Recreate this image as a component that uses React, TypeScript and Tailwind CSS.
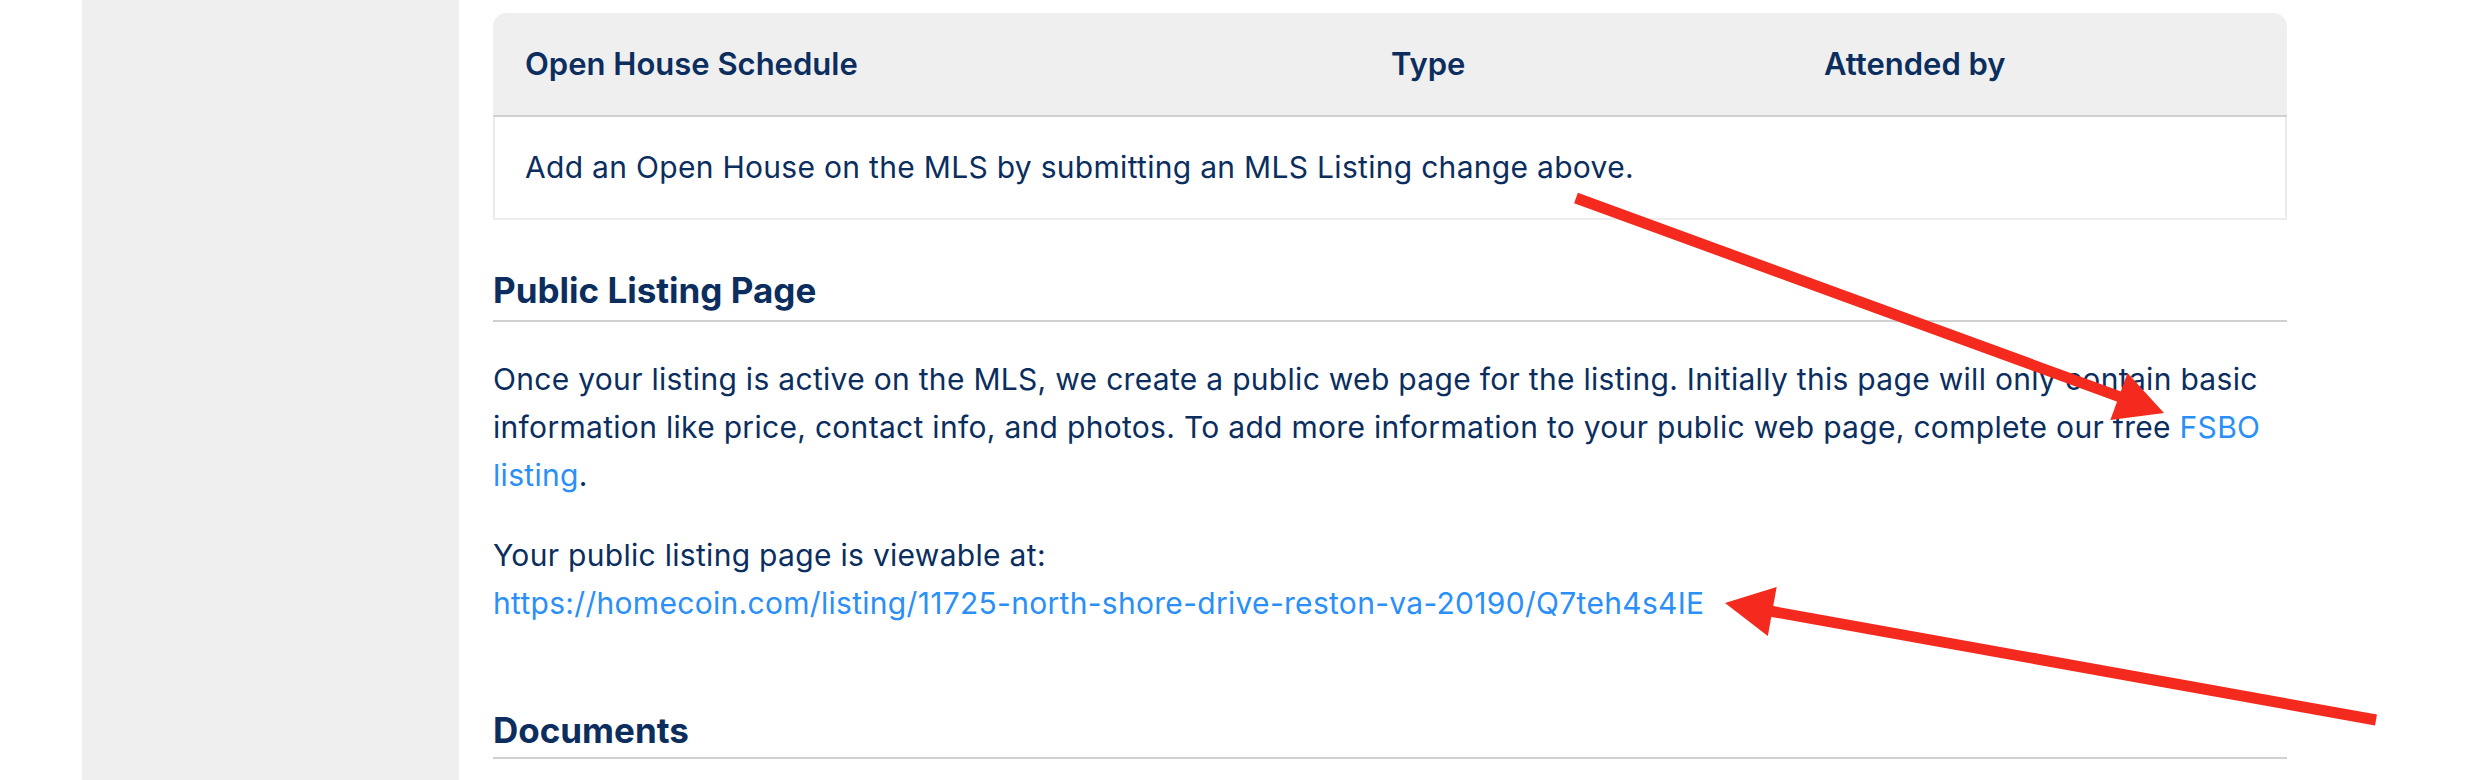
import React from "react";

const navy = "text-[#0b2e5e]";

const Arrow = ({
  tail,
  tip,
}: {
  tail: [number, number];
  tip: [number, number];
}) => {
  const dx = tip[0] - tail[0];
  const dy = tip[1] - tail[1];
  const len = Math.hypot(dx, dy);
  const ux = dx / len;
  const uy = dy / len;
  const nx = -uy;
  const ny = ux;
  const headLen = 48;
  const half = 25;
  const bx = tip[0] - ux * headLen;
  const by = tip[1] - uy * headLen;
  const pts = [
    `${tip[0]},${tip[1]}`,
    `${bx + nx * half},${by + ny * half}`,
    `${bx - nx * half},${by - ny * half}`,
  ].join(" ");
  return (
    <g>
      <line
        x1={tail[0]}
        y1={tail[1]}
        x2={bx + ux * 4}
        y2={by + uy * 4}
        stroke="#f42a1f"
        strokeWidth={11}
      />
      <polygon points={pts} fill="#f42a1f" />
    </g>
  );
};

export default function App() {
  return (
    <div
      className={`relative flex h-[780px] w-[2476px] overflow-hidden bg-white ${navy}`}
      style={{ fontFamily: "Inter, 'Liberation Sans', sans-serif" }}>
      <div className="w-[82px] shrink-0" />
      <div className="w-[377px] shrink-0 bg-[#efefef]" />

      <main className="ml-[34px] w-[1794px] shrink-0 pt-[13px]">
        {/* open house table */}
        <div className="overflow-hidden rounded-t-[14px]">
          <div className="grid h-[104px] grid-cols-[866px_433px_1fr] items-center border-b-2 border-[#d0d0d0] bg-[#efefef] text-[31px] font-semibold">
            <div className="pl-[32px]">Open House Schedule</div>
            <div className="pl-[32px]">Type</div>
            <div className="pl-[32px]">Attended by</div>
          </div>
          <div className="flex h-[103px] items-center border-2 border-t-0 border-[#ececec] pl-[30px] text-[30px] tracking-[0.3px]">
            Add an Open House on the MLS by submitting an MLS Listing change
            above.
          </div>
        </div>

        {/* public listing page */}
        <h2 className="mt-[46px] border-b-2 border-[#d0d0d0] pb-[6px] text-[35px] font-bold leading-[48px]">
          Public Listing Page
        </h2>
        <p className="mt-[33px] whitespace-nowrap text-[30px] leading-[48px] tracking-[0.3px]">
          Once your listing is active on the MLS, we create a public web page
          for the listing. Initially this page will only contain basic
          <br />
          information like price, contact info, and photos. To add more
          information to your public web page, complete our free{" "}
          <a className="text-[#2a8ff7]" href="#">
            FSBO
            <br />
            listing
          </a>
          .
        </p>
        <p className="mt-[32px] whitespace-nowrap text-[30px] leading-[48px] tracking-[0.3px]">
          Your public listing page is viewable at:
          <br />
          <a className="text-[#2a8ff7]" href="#">
            https://homecoin.com/listing/11725-north-shore-drive-reston-va-20190/Q7teh4s4IE
          </a>
        </p>

        <h2 className="mt-[79px] border-b-2 border-[#d0d0d0] pb-[3px] text-[35px] font-bold leading-[48px]">
          Documents
        </h2>
      </main>

      {/* annotation arrows */}
      <svg
        className="pointer-events-none absolute left-0 top-0"
        width={2476}
        height={780}>
        <Arrow tail={[1576, 198]} tip={[2164, 413]} />
        <Arrow tail={[2376, 720]} tip={[1725, 603]} />
      </svg>
    </div>
  );
}
